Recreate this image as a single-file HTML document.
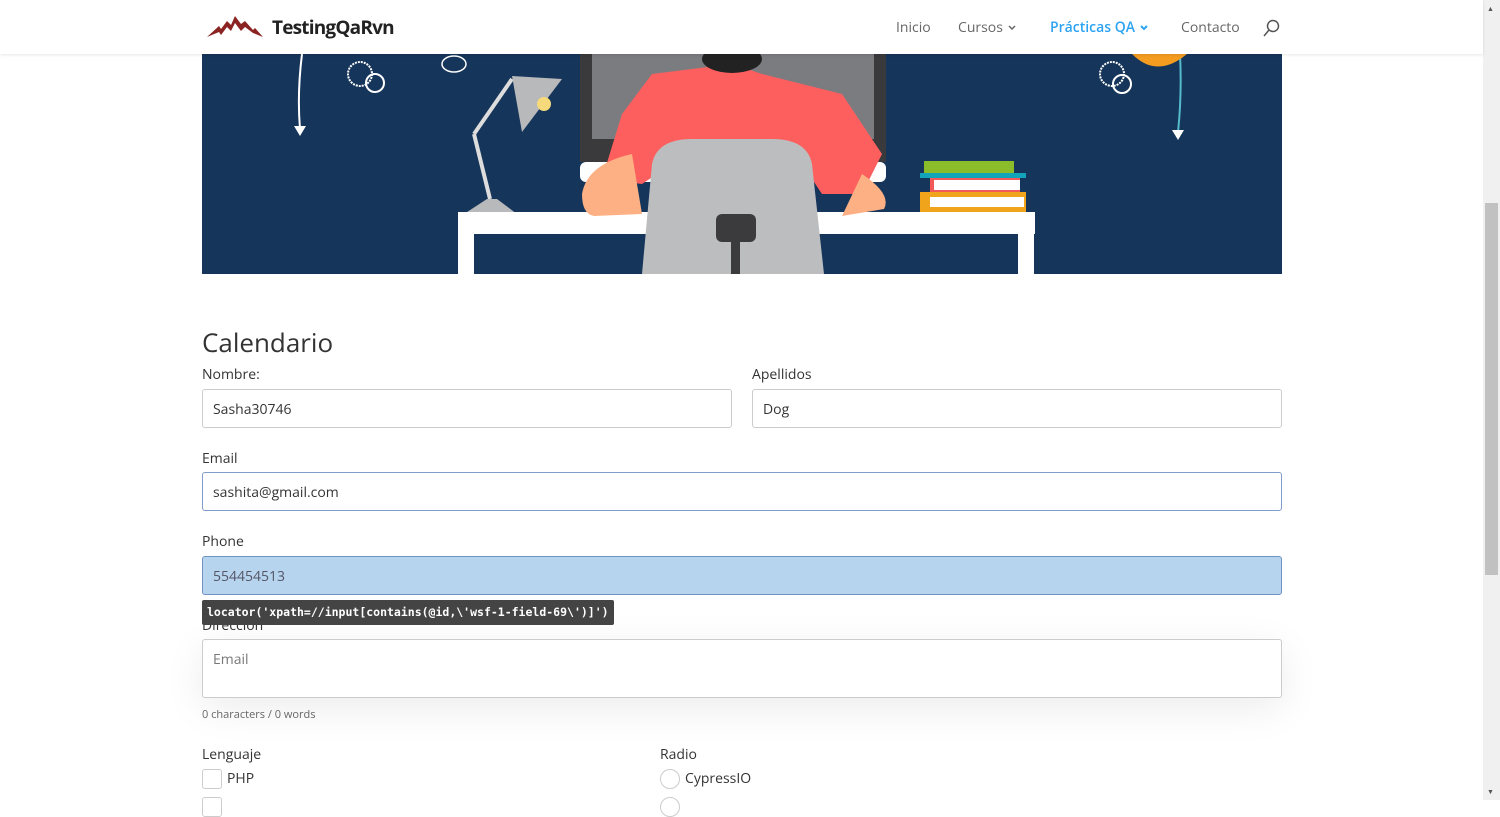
<!DOCTYPE html>
<html><head><meta charset="utf-8"><style>
*{box-sizing:border-box;margin:0;padding:0}
body{width:1500px;height:800px;overflow:hidden;background:#fff;font-family:"Open Sans","Liberation Sans",sans-serif;color:#333;position:relative}
.hdr{position:absolute;left:0;top:0;width:1483px;height:54px;background:#fff;box-shadow:0 1px 3px rgba(0,0,0,.1);z-index:5}
.logo{position:absolute;left:272px;top:14px;font-weight:bold;font-size:19px;color:#222;letter-spacing:-0.8px}
.nav{position:absolute;top:18px;font-size:14px;color:#666}
.chev{display:inline-block;vertical-align:middle;margin-left:4px}
.sb{position:absolute;left:1483px;top:0;width:17px;height:800px;background:#f0f0f0}
.thumb{position:absolute;left:1485px;top:203px;width:13px;height:372px;background:#c1c1c1}
.hero{position:absolute;left:202px;top:54px;width:1080px;height:220px;background:#16355a;overflow:hidden}
label{position:absolute;font-size:14px;color:#333}
.in{position:absolute;height:39px;border:1px solid #ccc;border-radius:3px;font-size:14px;padding:10px 10px;color:#333;background:#fff}
</style></head><body>
<div class="hdr">
<svg style="position:absolute;left:207px;top:14px" width="56" height="24" viewBox="0 0 56 24"><path d="M0 23 L12 12 L14 15 L20 7 L24 11 L28 2 L34 10 L38 7 L46 16 L48 14 L56 23 L46 19 L38 13 L34 17 L28 9 L24 17 L20 13 L14 21 L12 18Z" fill="#8b2323"/></svg>
<div class="logo">TestingQaRvn</div>
<div class="nav" style="left:896px">Inicio</div>
<div class="nav" style="left:958px">Cursos<svg class="chev" width="10" height="8"><path d="M2 2 L5 5 L8 2" stroke="#666" stroke-width="1.5" fill="none"/></svg></div>
<div class="nav" style="left:1050px;color:#2ea3f2;font-weight:600">Prácticas QA<svg class="chev" width="10" height="8"><path d="M2 2 L5 5 L8 2" stroke="#2ea3f2" stroke-width="2" fill="none"/></svg></div>
<div class="nav" style="left:1181px">Contacto</div>
<svg style="position:absolute;left:1263px;top:19px" width="17" height="18"><circle cx="10" cy="7" r="5.5" fill="none" stroke="#555" stroke-width="1.5"/><path d="M6 11 L1 17" stroke="#555" stroke-width="1.5"/></svg>
</div>
<div class="hero">
<svg width="1080" height="220" viewBox="0 0 1080 220">
<path d="M100 0 Q95 40 98 75" stroke="#fff" stroke-width="2" fill="none"/><path d="M92 72 L104 72 L98 82Z" fill="#fff"/>
<path d="M978 0 Q980 40 976 78" stroke="#5bc" stroke-width="2" fill="none"/><path d="M970 76 L982 76 L976 86Z" fill="#fff"/>
<circle cx="158" cy="20" r="12" fill="none" stroke="#fff" stroke-width="2" stroke-dasharray="2 1"/><circle cx="173" cy="29" r="9" fill="none" stroke="#fff" stroke-width="2"/>
<circle cx="910" cy="20" r="12" fill="none" stroke="#fff" stroke-width="2" stroke-dasharray="2 1"/><circle cx="920" cy="30" r="9" fill="none" stroke="#fff" stroke-width="2"/>
<ellipse cx="252" cy="10" rx="12" ry="8" fill="none" stroke="#fff" stroke-width="1.5"/>
<path d="M930 0 Q955 25 985 0Z" fill="#f39c1f"/>
<path d="M272 80 L310 25" stroke="#ddd" stroke-width="4"/><path d="M272 80 L288 145" stroke="#ddd" stroke-width="4"/>
<path d="M310 22 L360 25 L320 78Z" fill="#b8b9bb"/><circle cx="342" cy="50" r="7" fill="#f5d97a"/>
<path d="M262 160 L285 145 L295 145 L315 160Z" fill="#b8b9bb"/>
<rect x="378" y="0" width="306" height="108" fill="#3a3a3c"/><rect x="390" y="0" width="282" height="85" fill="#7b7c80"/>
<rect x="378" y="108" width="306" height="20" rx="6" fill="#fff"/>
<rect x="256" y="158" width="577" height="22" fill="#fff"/><rect x="256" y="158" width="16" height="62" fill="#fff"/><rect x="816" y="158" width="16" height="62" fill="#fff"/>
<path d="M450 20 L530 10 L560 20 L640 40 L680 100 L660 140 L620 140 L600 110 L470 110 L440 130 L400 125 L420 60Z" fill="#fd5f5f"/>
<path d="M380 140 Q385 110 430 100 L440 160 L392 162 Q380 160 380 140Z" fill="#fcb084"/>
<path d="M660 120 Q690 140 682 155 L640 162 Z" fill="#fcb084"/>
<ellipse cx="530" cy="5" rx="30" ry="14" fill="#222"/>
<path d="M440 220 L450 110 Q455 85 490 85 L570 85 Q605 85 610 110 L622 220Z" fill="#bcbdbf"/>
<rect x="514" y="160" width="40" height="28" rx="6" fill="#3b3b3d"/><rect x="529" y="186" width="9" height="34" fill="#3b3b3d"/>
<rect x="722" y="107" width="90" height="12" fill="#8bbd2b"/><rect x="718" y="119" width="106" height="5" fill="#12a4b8"/>
<rect x="728" y="124" width="90" height="14" fill="#f25a5a"/><rect x="732" y="126" width="86" height="10" fill="#fff"/>
<rect x="718" y="138" width="106" height="20" fill="#efa41b"/><rect x="728" y="143" width="94" height="10" fill="#fff"/>
</svg></div>
<div style="position:absolute;left:202px;top:324px;font-size:26px;color:#333">Calendario</div>
<label style="left:202px;top:365px">Nombre:</label>
<label style="left:752px;top:365px">Apellidos</label>
<div class="in" style="left:202px;top:389px;width:530px">Sasha30746</div>
<div class="in" style="left:752px;top:389px;width:530px">Dog</div>
<label style="left:202px;top:449px">Email</label>
<div class="in" style="left:202px;top:472px;width:1080px;border-color:#7f9bc9">sashita@gmail.com</div>
<label style="left:202px;top:532px">Phone</label>
<div class="in" style="left:202px;top:556px;width:1080px;background:#b6d4ee;border-color:#6f93c4;color:#556">554454513</div>
<label style="left:202px;top:616px">Direccion</label>
<div class="in" style="left:202px;top:639px;width:1080px;height:59px;color:#777;box-shadow:0 10px 40px 0 rgba(0,0,0,.08)">Email</div>
<div style="position:absolute;left:202px;top:600px;height:25px;background:#444;color:#fff;font-family:'DejaVu Sans Mono',monospace;font-weight:bold;font-size:11.5px;padding:5px 5px;border-radius:2px;z-index:3">locator('xpath=//input[contains(@id,\'wsf-1-field-69\')]')</div>
<div style="position:absolute;left:202px;top:707px;font-size:11px;color:#666">0 characters / 0 words</div>
<label style="left:202px;top:745px">Lenguaje</label>
<label style="left:660px;top:745px">Radio</label>
<div style="position:absolute;left:202px;top:769px;width:20px;height:20px;border:1px solid #ccc;border-radius:3px"></div>
<label style="left:227px;top:769px">PHP</label>
<div style="position:absolute;left:202px;top:797px;width:20px;height:20px;border:1px solid #ccc;border-radius:3px"></div>
<div style="position:absolute;left:660px;top:769px;width:20px;height:20px;border:1px solid #ccc;border-radius:50%"></div>
<label style="left:685px;top:769px">CypressIO</label>
<div style="position:absolute;left:660px;top:797px;width:20px;height:20px;border:1px solid #ccc;border-radius:50%"></div>
<div class="sb"></div><div class="thumb"></div>
<div style="position:absolute;left:1487px;top:5px;font-size:7px;color:#555">&#9650;</div>
<div style="position:absolute;left:1487px;top:788px;font-size:7px;color:#555">&#9660;</div>
</body></html>
